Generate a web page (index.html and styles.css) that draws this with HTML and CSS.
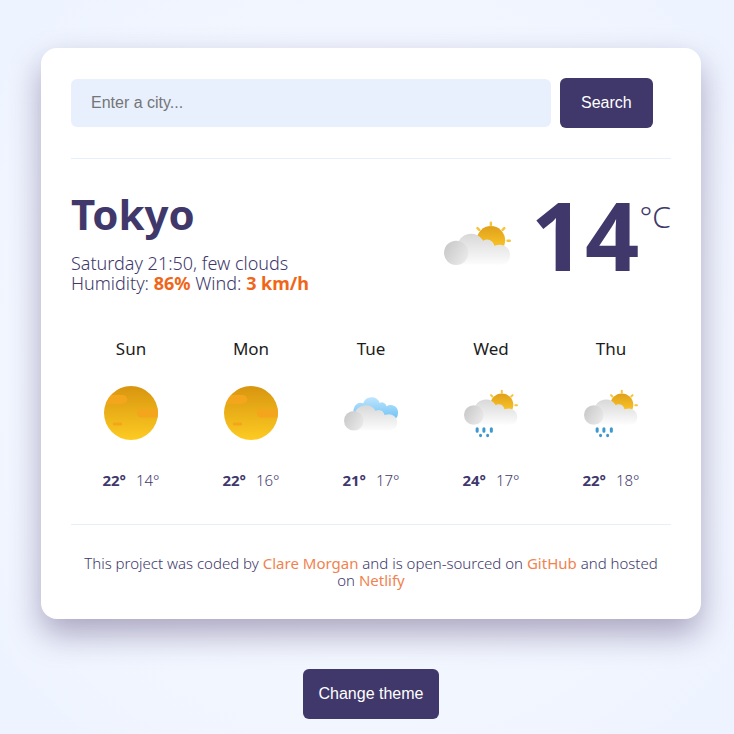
FILE: index.html
```html
<!DOCTYPE html>
<html lang="en">
<head>
<meta charset="utf-8">
<meta name="viewport" content="width=device-width, initial-scale=1">
<title>Weather</title>
<link rel="stylesheet" href="styles.css">
</head>
<body>
<svg class="defs" width="0" height="0" aria-hidden="true">
  <defs>
    <linearGradient id="gold" x1="0" y1="0" x2="0" y2="1"><stop offset="0" stop-color="#d8950f"/><stop offset="1" stop-color="#fdcb22"/></linearGradient>
    <linearGradient id="sunfill" x1="0" y1="0" x2="0" y2="1"><stop offset="0" stop-color="#dfa01b"/><stop offset="0.8" stop-color="#fcc628"/></linearGradient>
    <linearGradient id="grey" gradientUnits="userSpaceOnUse" x1="0" y1="36" x2="0" y2="114"><stop offset="0" stop-color="#d6d6d6"/><stop offset="1" stop-color="#fcfcfc"/></linearGradient>
    <linearGradient id="puff" x1="0" y1="0.2" x2="1" y2="0.8"><stop offset="0" stop-color="#c8c8c8"/><stop offset="1" stop-color="#ebebeb"/></linearGradient>
    <linearGradient id="blue" gradientUnits="userSpaceOnUse" x1="0" y1="30" x2="0" y2="100"><stop offset="0" stop-color="#c4e6fd"/><stop offset="1" stop-color="#6cc2f6"/></linearGradient>
    <clipPath id="disc"><circle cx="80" cy="80" r="80"/></clipPath>
    <g id="cloud">
      <path fill="url(#grey)" d="M28 114V70H31A34 34 0 0 1 94 57A17 17 0 0 1 120 69Q127 67 135 67A24 24 0 0 1 158 90Q158 114 134 114Z"/>
      <circle cx="29" cy="86" r="29" fill="url(#puff)"/>
    </g>
    <g id="sun">
      <circle cx="112" cy="56" r="34" fill="url(#sunfill)"/>
      <path d="M112 14v6M80 27l4 4M144 27l-4 4M152 57h5" stroke="#f8c43c" stroke-width="6" stroke-linecap="round"/>
    </g>
    <g id="rain" stroke="#3b98d0" stroke-width="9" stroke-linecap="round">
      <path d="M39 127v7M59 127v7M81 127v7M49 146v1M70 146v1"/>
    </g>
  </defs>
</svg>
<main>
  <div class="card">
    <form class="search">
      <input type="search" aria-label="City" placeholder="Enter a city...">
      <button type="button">Search</button>
    </form>
    <section class="current">
      <div>
        <h1>Tokyo</h1>
        <p>Saturday 21:50, few clouds<br>Humidity: <strong>86%</strong> Wind: <strong>3 km/h</strong></p>
      </div>
      <div class="temperature">
        <svg viewBox="0 10 160 108" aria-hidden="true"><use href="#sun"/><use href="#cloud"/></svg>
        <span class="value">14</span><span class="unit">°C</span>
      </div>
    </section>
    <section class="forecast">
      <div class="day"><h2>Sun</h2>
        <svg viewBox="0 0 160 160" aria-hidden="true"><circle cx="80" cy="80" r="80" fill="url(#gold)"/><g clip-path="url(#disc)" fill="#f3a51b"><rect x="-10" y="27" width="79" height="26" rx="13"/><rect x="97" y="67" width="80" height="26" rx="13"/><rect x="26" y="108" width="28" height="9" rx="4"/></g></svg>
        <p><b>22°</b><span>14°</span></p></div>
      <div class="day"><h2>Mon</h2>
        <svg viewBox="0 0 160 160" aria-hidden="true"><circle cx="80" cy="80" r="80" fill="url(#gold)"/><g clip-path="url(#disc)" fill="#f3a51b"><rect x="-10" y="27" width="79" height="26" rx="13"/><rect x="97" y="67" width="80" height="26" rx="13"/><rect x="26" y="108" width="28" height="9" rx="4"/></g></svg>
        <p><b>22°</b><span>16°</span></p></div>
      <div class="day"><h2>Tue</h2>
        <svg viewBox="0 0 160 160" aria-hidden="true"><path fill="url(#blue)" d="M50 100Q26 96 28 70A22 22 0 0 1 57 51A26 26 0 0 1 106 50A14 14 0 0 1 126 60A22 22 0 0 1 160 80Q160 100 140 100Z"/><g transform="translate(0 17)"><use href="#cloud"/></g></svg>
        <p><b>21°</b><span>17°</span></p></div>
      <div class="day"><h2>Wed</h2>
        <svg viewBox="0 0 160 160" aria-hidden="true"><use href="#sun"/><use href="#cloud"/><use href="#rain"/></svg>
        <p><b>24°</b><span>17°</span></p></div>
      <div class="day"><h2>Thu</h2>
        <svg viewBox="0 0 160 160" aria-hidden="true"><use href="#sun"/><use href="#cloud"/><use href="#rain"/></svg>
        <p><b>22°</b><span>18°</span></p></div>
    </section>
    <footer>This project was coded by <a href="#">Clare Morgan</a> and is open-sourced on <a href="#">GitHub</a> and hosted on <a href="#">Netlify</a></footer>
  </div>
  <button class="theme" type="button">Change theme</button>
</main>
</body>
</html>
```
FILE: styles.css
```css
* { box-sizing: border-box; }

body {
  margin: 0 0 0 8px;
  min-height: 100vh;
  font-family: "Noto Sans", "Open Sans", sans-serif;
  font-weight: 300;
  color: #40386b;
  background: radial-gradient(circle at 50% 50%, #fafcff 0%, #edf3ff 100%);
}

.defs { position: absolute; }

main {
  display: flex;
  flex-direction: column;
  align-items: center;
  gap: 50px;
  padding: 48px 16px 15px;
}

.card {
  width: 100%;
  max-width: 660px;
  padding: 30px;
  border-radius: 16px;
  background: #fff;
  box-shadow: 0 15px 32px rgba(64, 45, 100, 0.4);
}

.search {
  display: flex;
  align-items: center;
  gap: 9px;
  padding-bottom: 30px;
  border-bottom: 1px solid #e7f0fa;
}

input, button {
  border: 0;
  border-radius: 6px;
  font: 16px "Liberation Sans", Arial, sans-serif;
}

input {
  width: 80%;
  height: 48px;
  padding: 0 20px;
  background: #e8f0fe;
}

input::placeholder { color: #757575; }

button {
  height: 50px;
  padding: 0 21px;
  color: #fff;
  background: #40386b;
}

.theme { padding: 0 16px; }

.current {
  display: flex;
  justify-content: space-between;
  padding-top: 32px;
}

h1 {
  margin: 0 0 16px;
  font-size: 42px;
  line-height: 46px;
  font-weight: 700;
}

.current p {
  margin: 0;
  font-size: 18px;
  line-height: 20px;
}

strong {
  font-weight: 700;
  color: #f06618;
}

.temperature {
  display: flex;
  align-items: flex-start;
}

.temperature svg {
  width: 67px;
  margin: 30px 20px 0 0;
}

.value {
  font-size: 95px;
  line-height: 86px;
  font-weight: 700;
}

.unit {
  font-size: 30px;
  line-height: 52px;
}

.forecast {
  display: grid;
  grid-template-columns: repeat(5, 1fr);
  padding: 46px 0 34px;
  border-bottom: 1px solid #e7f0fa;
  text-align: center;
}

h2 {
  margin: 0;
  font-size: 17px;
  line-height: 20px;
  font-weight: 400;
  color: #1c1c1c;
}

.day svg {
  display: block;
  width: 54px;
  margin: 27px auto 30px;
}

.day p {
  display: flex;
  justify-content: center;
  gap: 10px;
  margin: 0;
  font-size: 15px;
  line-height: 20px;
}

.day b { font-weight: 700; }

footer {
  padding: 30px 6px 0;
  font-size: 15px;
  line-height: 17px;
  text-align: center;
}

a {
  color: #f08350;
  font-weight: 400;
  text-decoration: none;
}
```
